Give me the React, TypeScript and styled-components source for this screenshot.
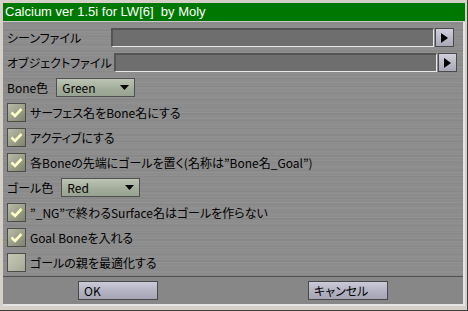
import React from 'react'
import styled, { createGlobalStyle } from 'styled-components'

const GlobalStyle = createGlobalStyle`
  html, body {
    margin: 0;
    padding: 0;
    background: #d4d0c8;
  }
  body {
    font-family: "Noto Sans CJK JP", "Liberation Sans", sans-serif;
    font-size: 12px;
    font-feature-settings: "palt";
    color: #000;
  }
`

// brushed-metal look of the dialog body
const brushed = `
  background-color: #8c8c8c;
  background-image:
    repeating-linear-gradient(180deg, rgba(255,255,255,0.035) 0 1px, transparent 1px 3px),
    repeating-linear-gradient(180deg, rgba(0,0,0,0.03) 0 2px, transparent 2px 7px),
    repeating-linear-gradient(180deg, rgba(255,255,255,0.025) 0 1px, transparent 1px 5px);
`

const Div_Window = styled.div`
  width: 468px;
  height: 311px;
  box-sizing: border-box;
  padding: 3px 3px 5px 3px;
  background: #d4d0c8;
  box-shadow: inset -1px -1px 0 #404040;
  display: flex;
  flex-direction: column;
`

const Div_TitleBar = styled.div`
  height: 18px;
  background: #007800;
  color: #fff;
  font-family: "Liberation Sans", sans-serif;
  font-size: 13px;
  line-height: 18px;
  padding-left: 2px;
  white-space: pre;
  border-bottom: 1px solid #c8c8c8;
  flex-shrink: 0;
`

const Div_Panel = styled.div`
  flex: 1;
  display: flex;
  flex-direction: column;
  border-right: 2px solid #e4e4e4;
  border-bottom: 2px solid #e4e4e4;
`

const Div_Body = styled.div`
  ${brushed}
  height: 254px;
  box-sizing: border-box;
  padding: 3px 0 0 4px;
  display: flex;
  flex-direction: column;
`

const Div_Row = styled.div`
  height: 25px;
  display: flex;
  align-items: center;
`

const Span_Label = styled.span<{ $width?: number }>`
  width: ${p => (p.$width ? `${p.$width}px` : 'auto')};
  margin-right: ${p => (p.$width ? '0' : '8px')};
  white-space: nowrap;
  flex-shrink: 0;
`

const Div_Field = styled.div`
  width: 323px;
  height: 19px;
  box-sizing: border-box;
  background: #6e6e6e;
  border-top: 2px solid #545454;
  border-left: 2px solid #545454;
  border-bottom: 1px solid #e8e8e8;
  border-right: 1px solid #e8e8e8;
`

const Button_Arrow = styled.div`
  width: 19px;
  height: 19px;
  margin-left: 1px;
  box-sizing: border-box;
  border: 1px solid #4a4a4a;
  background: linear-gradient(180deg, #d0d0dc 0%, #a8a8b6 100%);
  display: flex;
  align-items: center;
  justify-content: center;
`

const Div_Select = styled.div`
  width: 79px;
  height: 19px;
  box-sizing: border-box;
  border: 1px solid #505050;
  background: linear-gradient(180deg, #bcc4b4 0%, #a2ac9a 60%, #98a290 100%);
  display: flex;
  align-items: center;
  justify-content: space-between;
  padding: 0 5px 0 5px;
  line-height: 17px;
`

const Div_CheckBox = styled.div<{ $checked?: boolean }>`
  width: 19px;
  height: 19px;
  box-sizing: border-box;
  border: 1px solid #4c4c48;
  margin-right: 4px;
  flex-shrink: 0;
  background: ${p =>
    p.$checked
      ? 'linear-gradient(135deg, #b8bca6 0%, #9a9e88 55%, #7e826e 100%)'
      : 'linear-gradient(135deg, #c6c8b6 0%, #b2b6a2 60%, #a4a894 100%)'};
  display: flex;
  align-items: center;
  justify-content: center;
`

const Div_Footer = styled.div`
  flex: 1;
  background: #878787;
  border-top: 1px solid #505050;
  display: grid;
  grid-template-columns: 1fr 1fr;
  align-items: center;
  justify-items: center;
`

const Button_Footer = styled.div`
  width: 80px;
  height: 19px;
  box-sizing: border-box;
  border: 1px solid #484848;
  background: linear-gradient(180deg, #cacad8 0%, #b4b4c4 50%, #a4a4b4 100%);
  padding-left: 5px;
  line-height: 17px;
`

const ArrowIcon = () => (
  <svg width='7' height='10' viewBox='0 0 7 10'>
    <polygon points='0,0 7,5 0,10' fill='#000' />
  </svg>
)

const DownIcon = () => (
  <svg width='9' height='5' viewBox='0 0 9 5'>
    <polygon points='0,0 9,0 4.5,5' fill='#000' />
  </svg>
)

const CheckIcon = () => (
  <svg width='13' height='11' viewBox='0 0 13 11'>
    <polyline points='1.5,5.5 5,9 11.5,2' fill='none' stroke='#ffffc8' strokeWidth='2.6' />
  </svg>
)

const FileRow = (props: { label: string; labelWidth: number }) => (
  <Div_Row>
    <Span_Label $width={props.labelWidth}>{props.label}</Span_Label>
    <Div_Field />
    <Button_Arrow>
      <ArrowIcon />
    </Button_Arrow>
  </Div_Row>
)

const SelectRow = (props: { label: string; value: string }) => (
  <Div_Row>
    <Span_Label>{props.label}</Span_Label>
    <Div_Select>
      <span>{props.value}</span>
      <DownIcon />
    </Div_Select>
  </Div_Row>
)

const CheckRow = (props: { label: string; checked?: boolean }) => (
  <Div_Row>
    <Div_CheckBox $checked={props.checked}>{props.checked && <CheckIcon />}</Div_CheckBox>
    <span>{props.label}</span>
  </Div_Row>
)

export default function App() {
  return (
    <>
      <GlobalStyle />
      <Div_Window>
        <Div_TitleBar>Calcium ver 1.5i for LW[6]  by Moly</Div_TitleBar>
        <Div_Panel>
          <Div_Body>
            <FileRow label='シーンファイル' labelWidth={104} />
            <FileRow label='オブジェクトファイル' labelWidth={107} />
            <SelectRow label='Bone色' value='Green' />
            <CheckRow label='サーフェス名をBone名にする' checked />
            <CheckRow label='アクティブにする' checked />
            <CheckRow label='各Boneの先端にゴールを置く(名称は”Bone名_Goal”)' checked />
            <SelectRow label='ゴール色' value='Red' />
            <CheckRow label='”_NG”で終わるSurface名はゴールを作らない' checked />
            <CheckRow label='Goal Boneを入れる' checked />
            <CheckRow label='ゴールの親を最適化する' />
          </Div_Body>
          <Div_Footer>
            <Button_Footer>OK</Button_Footer>
            <Button_Footer>キャンセル</Button_Footer>
          </Div_Footer>
        </Div_Panel>
      </Div_Window>
    </>
  )
}
